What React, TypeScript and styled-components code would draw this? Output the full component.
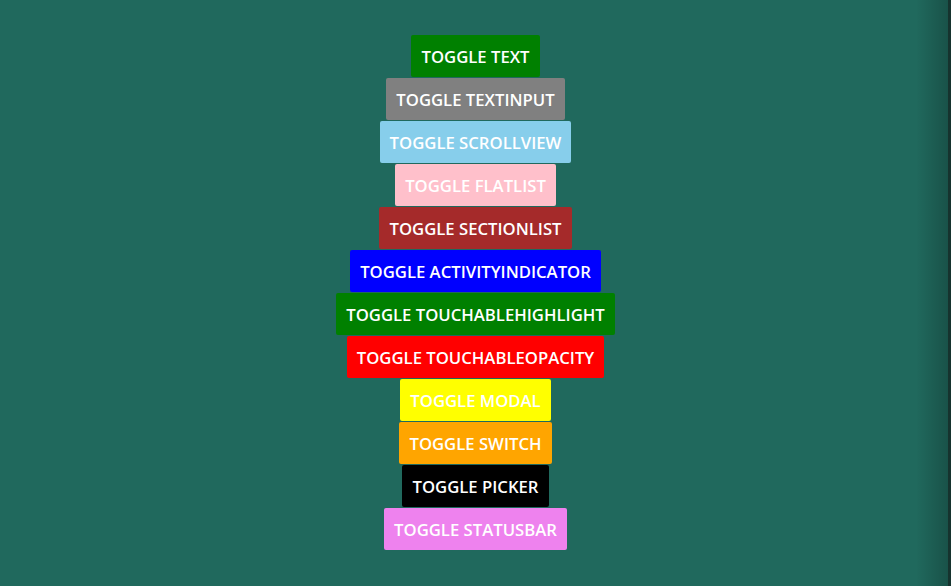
import React from 'react';
import styled, { createGlobalStyle } from 'styled-components';

const GlobalStyle = createGlobalStyle`
  html, body {
    margin: 0;
    padding: 0;
    height: 100%;
    background: #20695d;
  }
  #root {
    height: 100%;
  }
`;

const Screen = styled.div`
  position: relative;
  min-height: 100%;
  box-sizing: border-box;
  padding-top: 35px;
  display: flex;
  flex-direction: column;
  align-items: center;
  background: #20695d;

  &::after {
    content: '';
    position: absolute;
    top: 0;
    right: 0;
    bottom: 0;
    width: 32px;
    background: linear-gradient(to right, rgba(0, 0, 0, 0), rgba(0, 0, 0, 0.22));
    border-right: 3px solid #16332e;
  }
`;

const ToggleButton = styled.button<{ $bg: string }>`
  height: 42px;
  margin: 0 0 1px;
  padding: 1px 10px 0;
  border: none;
  border-radius: 2px;
  background: ${p => p.$bg};
  color: #ffffff;
  font-family: 'Open Sans', 'Noto Sans', sans-serif;
  font-weight: 600;
  font-size: 16.7px;
  text-transform: uppercase;
  cursor: pointer;
`;

const buttons = [
  { label: 'Toggle Text', color: '#008000' },
  { label: 'Toggle TextInput', color: '#808080' },
  { label: 'Toggle ScrollView', color: '#87ceeb' },
  { label: 'Toggle FlatList', color: '#ffc0cb' },
  { label: 'Toggle SectionList', color: '#a52a2a' },
  { label: 'Toggle ActivityIndicator', color: '#0000ff' },
  { label: 'Toggle TouchableHighlight', color: '#008000' },
  { label: 'Toggle TouchableOpacity', color: '#ff0000' },
  { label: 'Toggle Modal', color: '#ffff00' },
  { label: 'Toggle Switch', color: '#ffa500' },
  { label: 'Toggle Picker', color: '#000000' },
  { label: 'Toggle StatusBar', color: '#ee82ee' },
];

export default function App() {
  return (
    <>
      <GlobalStyle />
      <Screen>
        {buttons.map(b => (
          <ToggleButton key={b.label} $bg={b.color}>
            {b.label}
          </ToggleButton>
        ))}
      </Screen>
    </>
  );
}
